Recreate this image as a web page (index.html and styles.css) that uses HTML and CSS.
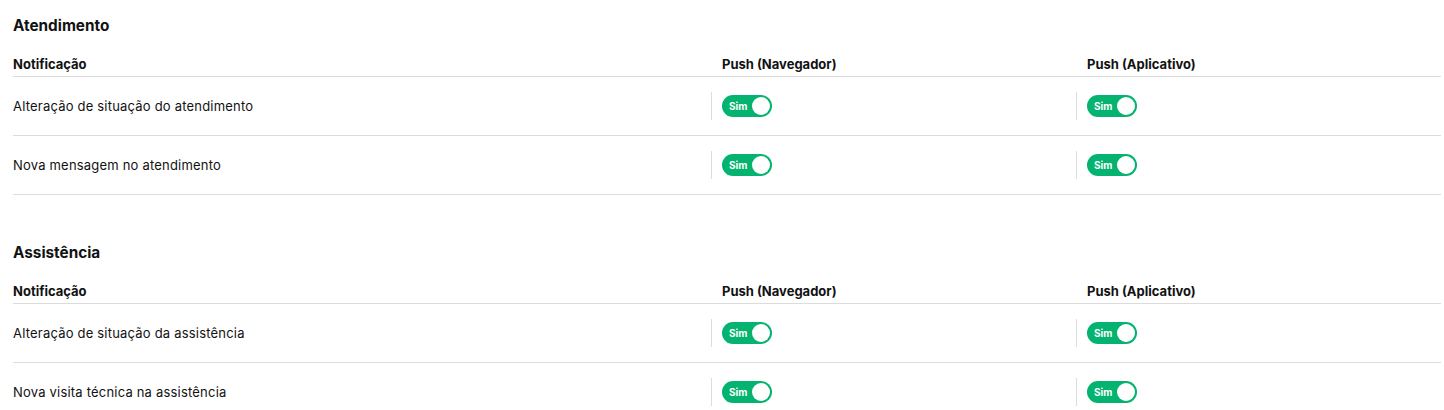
FILE: index.html
```html
<!DOCTYPE html>
<html lang="pt-BR">
<head>
<meta charset="utf-8">
<title>Notificações</title>
<link rel="stylesheet" href="styles.css">
</head>
<body>
<div class="page">
  <section class="group">
    <h2 class="group-title">Atendimento</h2>
    <div class="table">
      <div class="row head">
        <div class="cell first">Notificação</div>
        <div class="cell">Push (Navegador)</div>
        <div class="cell">Push (Aplicativo)</div>
      </div>
      <div class="row">
        <div class="cell first">Alteração de situação do atendimento</div>
        <div class="cell ctrl"><span class="toggle"><span class="lbl">Sim</span><span class="knob"></span></span></div>
        <div class="cell ctrl"><span class="toggle"><span class="lbl">Sim</span><span class="knob"></span></span></div>
      </div>
      <div class="row">
        <div class="cell first">Nova mensagem no atendimento</div>
        <div class="cell ctrl"><span class="toggle"><span class="lbl">Sim</span><span class="knob"></span></span></div>
        <div class="cell ctrl"><span class="toggle"><span class="lbl">Sim</span><span class="knob"></span></span></div>
      </div>
    </div>
  </section>
  <section class="group">
    <h2 class="group-title">Assistência</h2>
    <div class="table">
      <div class="row head">
        <div class="cell first">Notificação</div>
        <div class="cell">Push (Navegador)</div>
        <div class="cell">Push (Aplicativo)</div>
      </div>
      <div class="row">
        <div class="cell first">Alteração de situação da assistência</div>
        <div class="cell ctrl"><span class="toggle"><span class="lbl">Sim</span><span class="knob"></span></span></div>
        <div class="cell ctrl"><span class="toggle"><span class="lbl">Sim</span><span class="knob"></span></span></div>
      </div>
      <div class="row">
        <div class="cell first">Nova visita técnica na assistência</div>
        <div class="cell ctrl"><span class="toggle"><span class="lbl">Sim</span><span class="knob"></span></span></div>
        <div class="cell ctrl"><span class="toggle"><span class="lbl">Sim</span><span class="knob"></span></span></div>
      </div>
    </div>
  </section>
</div>
</body>
</html>
```

FILE: styles.css
```css
* { box-sizing: border-box; }
html, body { margin: 0; padding: 0; background: #fff; }
body {
  font-family: "Inter", "Noto Sans", sans-serif;
  color: #121212;
  font-size: 13px;
}
.page {
  padding: 0 3px 0 13px;
  display: flex;
  flex-direction: column;
  gap: 32px;
}
.group-title {
  margin: 0;
  padding-top: 16px;
  font-size: 15.3px;
  line-height: 20px;
  font-weight: 700;
  height: 53px;
}
.row {
  display: grid;
  grid-template-columns: 698px 365px 1fr;
  border-bottom: 1px solid #dcdcdc;
  height: 59px;
  align-items: center;
}
.row.head {
  height: 24px;
  align-items: start;
  padding-top: 3px;
  font-weight: 700;
}
.row:not(.head) .cell.first { letter-spacing: 0.2px; }
.cell { padding-left: 11px; line-height: 16px; }
.cell.first { padding-left: 0; }
.cell.ctrl {
  border-left: 1px solid #dcdcdc;
  height: 28px;
  display: flex;
  align-items: center;
  padding-left: 10px;
}
.toggle {
  width: 50px;
  height: 22px;
  border-radius: 11px;
  background: #03b36f;
  display: flex;
  align-items: center;
  justify-content: space-between;
  padding: 0 2px 0 7px;
}
.lbl {
  color: #fff;
  font-size: 10px;
  font-weight: 700;
  line-height: 12px;
}
.knob {
  width: 18px;
  height: 18px;
  border-radius: 50%;
  background: #fff;
}
```
